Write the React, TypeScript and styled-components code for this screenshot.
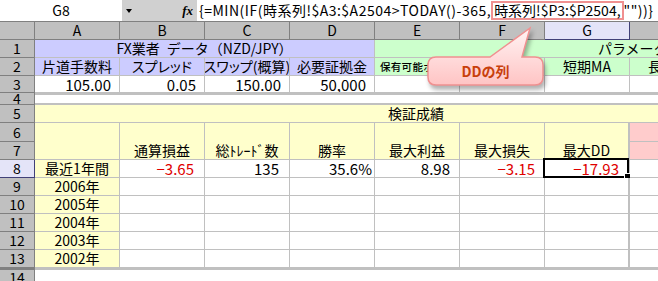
import React from 'react';
import styled, { createGlobalStyle } from 'styled-components';

const GRID = '#c0c0c0';
const HEAD_BG = '#c0c0c0';
const HEAD_LINE = '#808080';
const LAVENDER = '#ccccff';
const GREEN = '#ccffcc';
const YELLOW = '#ffffcc';
const PINK = '#ffcccc';
const RED = '#e00000';

const GlobalStyle = createGlobalStyle`
  html, body {
    margin: 0;
    padding: 0;
    background: #fff;
    overflow: hidden;
  }
  body {
    font-family: "Noto Sans CJK JP", "Liberation Sans", sans-serif;
    font-size: 14px;
    color: #000;
  }
`;

const Page = styled.div`
  position: relative;
  width: 658px;
  height: 281px;
  overflow: hidden;
`;

const FormulaBar = styled.div`
  display: flex;
  height: 22px;
  box-sizing: border-box;
  border-bottom: 1px solid ${HEAD_LINE};
  background: #d0d0d0;
`;

const NameBox = styled.div`
  width: 122px;
  background: #fff;
  text-align: center;
  line-height: 20px;
`;

const DropArrow = styled.div`
  width: 14px;
  display: flex;
  align-items: center;
  justify-content: center;
  &::after {
    content: '';
    border-left: 3px solid transparent;
    border-right: 3px solid transparent;
    border-top: 4px solid #000;
  }
`;

const FxBox = styled.div`
  width: 61px;
  display: flex;
  align-items: center;
  justify-content: flex-end;
  padding-right: 4px;
  box-sizing: border-box;
  font-family: "Liberation Serif", serif;
  font-style: italic;
  font-weight: bold;
  font-size: 13px;
`;

const FormulaText = styled.div`
  flex: 1;
  background: #fff;
  padding-left: 2px;
  line-height: 20px;
  letter-spacing: 0.5px;
  white-space: nowrap;
  overflow: hidden;
`;

const Marked = styled.span`
  display: inline-block;
  line-height: 15px;
  letter-spacing: 0;
  border: 2px solid #f09090;
  padding: 0 1px;
`;

const Sheet = styled.div`
  display: grid;
  grid-template-columns: 35px repeat(8, 85px);
  grid-template-rows: 18px 18px 18px 17px 12px 18px 19px 18px repeat(6, 18px) 18px;
`;

const Corner = styled.div`
  background: ${HEAD_BG};
  border-right: 1px solid ${HEAD_LINE};
  border-bottom: 1px solid ${HEAD_LINE};
  box-sizing: border-box;
`;

const ColHead = styled.div<{ $active?: boolean }>`
  background: ${p => (p.$active ? '#e4e4f8' : HEAD_BG)};
  border-right: 1px solid ${p => (p.$active ? '#404078' : HEAD_LINE)};
  border-bottom: 1px solid ${p => (p.$active ? '#404078' : HEAD_LINE)};
  box-sizing: border-box;
  display: flex;
  align-items: center;
  justify-content: center;
  line-height: 17px;
`;

const RowHead = styled.div<{ $active?: boolean; $thick?: boolean; $clipped?: boolean }>`
  background: ${p => (p.$active ? '#e4e4f8' : HEAD_BG)};
  border-right: 1px solid ${p => (p.$active ? '#404078' : HEAD_LINE)};
  border-bottom: 1px solid ${p => (p.$active ? '#404078' : HEAD_LINE)};
  border-top: ${p => (p.$thick ? `2px solid ${HEAD_LINE}` : 'none')};
  box-sizing: border-box;
  display: flex;
  align-items: ${p => (p.$clipped ? 'flex-end' : 'center')};
  justify-content: center;
  line-height: ${p => (p.$clipped ? '12px' : '17px')};
  overflow: hidden;
`;

type CellProps = {
  $bg?: string;
  $align?: 'left' | 'center' | 'right';
  $span?: number;
  $rows?: number;
  $red?: boolean;
  $num?: boolean;
  $palt?: boolean;
  $pr?: number;
  $pl?: number;
  $bottom?: boolean;
  $thickRight?: boolean;
  $thickTop?: boolean;
  $band?: boolean;
};

const justify = { left: 'flex-start', center: 'center', right: 'flex-end' };

const Cell = styled.div<CellProps>`
  position: relative;
  grid-column: span ${p => p.$span ?? 1};
  grid-row: span ${p => p.$rows ?? 1};
  background: ${p => p.$bg ?? '#fff'};
  box-sizing: border-box;
  border-right: ${p => (p.$band ? 'none' : `${p.$thickRight ? 2 : 1}px solid ${GRID}`)};
  border-bottom: ${p => (p.$band ? 2 : 1)}px solid ${GRID};
  border-top: ${p => (p.$thickTop || p.$band ? `2px solid ${GRID}` : 'none')};
  display: flex;
  align-items: ${p => (p.$bottom ? 'flex-end' : 'center')};
  justify-content: ${p => justify[p.$align ?? 'left']};
  padding: 0 ${p => p.$pr ?? 3}px 0 ${p => p.$pl ?? 3}px;
  color: ${p => (p.$red ? RED : '#000')};
  font-size: ${p => (p.$num ? '15px' : '14px')};
  font-feature-settings: ${p => (p.$palt ? '"palt"' : 'normal')};
  line-height: 17px;
  white-space: nowrap;
  overflow: hidden;
  min-width: 0;
`;

const SmallText = styled.span`
  font-size: 10.5px;
  font-weight: 500;
  letter-spacing: 0.3px;
`;

const Selection = styled.div`
  position: absolute;
  left: -2px;
  top: -2px;
  right: -1px;
  bottom: -1px;
  border: 2px solid #000;
  pointer-events: none;
  &::after {
    content: '';
    position: absolute;
    right: -4px;
    bottom: -4px;
    width: 5px;
    height: 5px;
    background: #000;
    border: 1px solid #fff;
  }
`;

const SelectedCell = styled(Cell)`
  overflow: visible;
`;

const Callout = styled.div`
  position: absolute;
  left: 420px;
  top: 20px;
  width: 135px;
  height: 80px;
  pointer-events: none;
`;

const CalloutShape = styled.svg`
  display: block;
  filter: drop-shadow(2px 4px 2px rgba(0, 0, 0, 0.3));
`;

const CalloutLabel = styled.div`
  position: absolute;
  left: 8px;
  top: 37px;
  width: 115px;
  height: 28px;
  display: flex;
  align-items: center;
  justify-content: center;
  font-weight: bold;
  font-size: 14px;
  color: #c8400c;
`;

const metrics = ['通算損益', '総ﾄﾚｰﾄﾞ数', '勝率', '最大利益', '最大損失', '最大DD'];
const years = ['2006年', '2005年', '2004年', '2003年', '2002年'];

const App = () => {
  return (
    <Page>
      <GlobalStyle />
      <FormulaBar>
        <NameBox>G8</NameBox>
        <DropArrow />
        <FxBox>fx</FxBox>
        <FormulaText>
          {'{=MIN(IF(時系列!$A3:$A2504>TODAY()-365,'}
          <Marked>時系列!$P3:$P2504,</Marked>
          {'""))}'}
        </FormulaText>
      </FormulaBar>

      <Sheet>
        <Corner />
        {['A', 'B', 'C', 'D', 'E', 'F', 'G', 'H'].map(c => (
          <ColHead key={c} $active={c === 'G'}>{c}</ColHead>
        ))}

        <RowHead>1</RowHead>
        <Cell $span={4} $bg={LAVENDER} $align="center">FX業者{'\u2002'}データ（NZD/JPY）</Cell>
        <Cell $span={4} $bg={GREEN} $pl={223}>パラメータ</Cell>

        <RowHead>2</RowHead>
        <Cell $bg={LAVENDER} $align="center">片道手数料</Cell>
        <Cell $bg={LAVENDER} $align="center" $palt>スプレッド</Cell>
        <Cell $bg={LAVENDER} $align="center" $palt>スワップ(概算)</Cell>
        <Cell $bg={LAVENDER} $align="center">必要証拠金</Cell>
        <Cell $bg={GREEN} $pl={5}><SmallText>保有可能ポジション</SmallText></Cell>
        <Cell $bg={GREEN} />
        <Cell $bg={GREEN} $align="center">短期MA</Cell>
        <Cell $bg={GREEN} $align="center">長期MA</Cell>

        <RowHead>3</RowHead>
        <Cell $num $align="right" $pr={8}>105.00</Cell>
        <Cell $num $align="right" $pr={8}>0.05</Cell>
        <Cell $num $align="right" $pr={8}>150.00</Cell>
        <Cell $num $align="right" $pr={8}>50,000</Cell>
        <Cell />
        <Cell />
        <Cell />
        <Cell />

        <RowHead $clipped>4</RowHead>
        <Cell $span={8} $band />

        <RowHead>5</RowHead>
        <Cell $span={8} $bg={YELLOW} $pl={353}>検証成績</Cell>

        <RowHead>6</RowHead>
        <Cell $rows={2} $bg={YELLOW} />
        {metrics.map(m => (
          <Cell key={m} $rows={2} $bg={YELLOW} $align="center" $bottom $thickRight={m === '最大DD'}>
            {m}
          </Cell>
        ))}
        <Cell $bg={PINK} />
        <RowHead>7</RowHead>
        <Cell $bg={PINK} />

        <RowHead $active>8</RowHead>
        <Cell $bg={YELLOW} $align="center">最近1年間</Cell>
        <Cell $num $align="right" $pr={10} $red>−3.65</Cell>
        <Cell $num $align="right" $pr={10}>135</Cell>
        <Cell $num $align="right" $pr={2}>35.6%</Cell>
        <Cell $num $align="right" $pr={9}>8.98</Cell>
        <Cell $num $align="right" $pr={9} $red>−3.15</Cell>
        <SelectedCell $num $align="right" $pr={9} $red $thickRight>
          −17.93
          <Selection />
        </SelectedCell>
        <Cell />

        {years.map((y, i) => (
          <React.Fragment key={y}>
            <RowHead>{9 + i}</RowHead>
            <Cell $bg={YELLOW} $align="center">{y}</Cell>
            <Cell />
            <Cell />
            <Cell />
            <Cell />
            <Cell />
            <Cell $thickRight />
            <Cell />
          </React.Fragment>
        ))}

        <RowHead $thick>14</RowHead>
        <Cell $span={8} $thickTop />
      </Sheet>

      <Callout>
        <CalloutShape width="135" height="80" viewBox="0 0 135 80">
          <defs>
            <linearGradient id="calloutFill" x1="0" y1="0" x2="0" y2="1">
              <stop offset="0" stopColor="#fff4f4" />
              <stop offset="0.5" stopColor="#ffdcdc" />
              <stop offset="1" stopColor="#ffc4c4" />
            </linearGradient>
          </defs>
          <path
            d="M 16 37 H 70 L 110 8 L 102 37 H 115 Q 123 37 123 45 V 57 Q 123 65 115 65 H 16 Q 8 65 8 57 V 45 Q 8 37 16 37 Z"
            fill="url(#calloutFill)"
            stroke="#f09090"
            strokeWidth="1.5"
          />
        </CalloutShape>
        <CalloutLabel>DDの列</CalloutLabel>
      </Callout>
    </Page>
  );
};

export default App;
